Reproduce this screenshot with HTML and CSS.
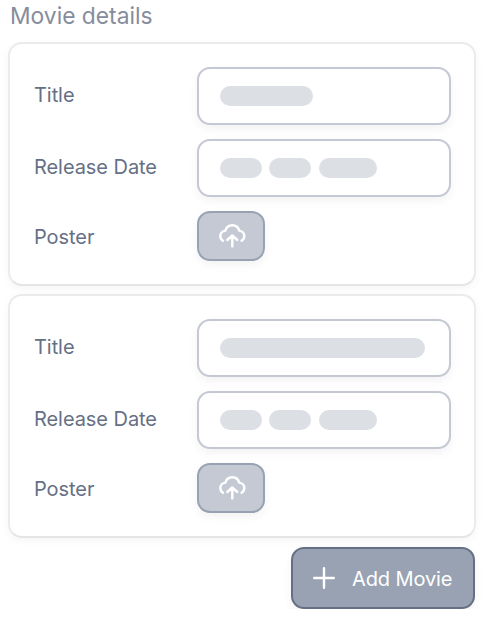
FILE: index.html
```html
<!DOCTYPE html>
<html lang="en">
<head>
<meta charset="utf-8">
<title>Movie details</title>
<link rel="stylesheet" href="styles.css">
</head>
<body>
<main class="form">
  <h1 class="heading">Movie details</h1>
  <section class="card">
    <div class="row"><span class="label">Title</span><div class="field"><i class="pill title-short"></i></div></div>
    <div class="row"><span class="label">Release Date</span><div class="field"><i class="pill"></i><i class="pill"></i><i class="pill year"></i></div></div>
    <div class="row poster"><span class="label">Poster</span><button class="upload" aria-label="Upload"><svg class="cloud" viewBox="0 0 28 26"><path d="M5 17.8C3.2 16.8 2.3 15 2.3 13C2.3 10 4.7 7.9 7.4 7.6C8.3 4.2 11 2.2 14.3 2.2C17.6 2.2 20.3 4.2 21.2 7.6C24 7.9 26.3 10 26.3 13C26.3 15 25.4 16.8 23.6 17.8M14.3 23.4V12.6M9.3 17L14.3 12.4L19.3 17"/></svg></button></div>
  </section>
  <section class="card">
    <div class="row"><span class="label">Title</span><div class="field"><i class="pill title-long"></i></div></div>
    <div class="row"><span class="label">Release Date</span><div class="field"><i class="pill"></i><i class="pill"></i><i class="pill year"></i></div></div>
    <div class="row poster"><span class="label">Poster</span><button class="upload" aria-label="Upload"><svg class="cloud" viewBox="0 0 28 26"><path d="M5 17.8C3.2 16.8 2.3 15 2.3 13C2.3 10 4.7 7.9 7.4 7.6C8.3 4.2 11 2.2 14.3 2.2C17.6 2.2 20.3 4.2 21.2 7.6C24 7.9 26.3 10 26.3 13C26.3 15 25.4 16.8 23.6 17.8M14.3 23.4V12.6M9.3 17L14.3 12.4L19.3 17"/></svg></button></div>
  </section>
  <button class="add"><svg class="plus" viewBox="0 0 22 22"><path d="M11 1.2V20.8M1.2 11H20.8"/></svg><span>Add Movie</span></button>
</main>
</body>
</html>
```
FILE: styles.css
```css
* { box-sizing: border-box; }
body {
  margin: 0;
  background: #fff;
  color: #667085;
  font-family: Inter, sans-serif;
  font-size: 20px;
}
.form {
  display: flex;
  flex-direction: column;
  width: 468px;
  margin-left: 8px;
}
.heading {
  height: 42px;
  margin: 0;
  padding-left: 2px;
  font-size: 22.8px;
  font-weight: 400;
  line-height: 32px;
  color: #858d9d;
}
.card {
  display: flex;
  flex-direction: column;
  gap: 14px;
  height: 244px;
  margin-bottom: 8px;
  padding: 23px 23px 23px 24px;
  border: 2px solid #ebebeb;
  border-bottom-color: #e5e5e5;
  border-radius: 14px;
  background: #fff;
  box-shadow: 0 3px 8px rgba(0, 0, 0, .04);
}
.row {
  display: grid;
  grid-template-columns: 163px 254px;
  height: 58px;
}
.poster { height: 50px; }
.label {
  align-self: center;
  line-height: 24px;
  padding-bottom: 2px;
  letter-spacing: -.06px;
}
.poster .label { padding: 2px 0 0; }
.field {
  display: flex;
  align-items: center;
  gap: 7.4px;
  padding-left: 21px;
  border: 2px solid #c4c8d3;
  border-radius: 13px;
  background: #fff;
  box-shadow: 0 4px 10px rgba(0, 0, 0, .05);
}
.pill {
  width: 42px;
  height: 20px;
  border-radius: 10px;
  background: #dce0e5;
}
.year { width: 58px; }
.title-short { width: 93px; }
.title-long { width: 205px; }
.upload {
  display: flex;
  align-items: center;
  justify-content: center;
  width: 68px;
  height: 50px;
  padding: 0 0 0 2px;
  border: 2px solid #98a2b3;
  border-radius: 13px;
  background: #c4c9d3;
  box-shadow: 0 4px 10px rgba(0, 0, 0, .05);
}
.cloud {
  width: 28px;
  height: 26px;
}
.cloud path, .plus path {
  fill: none;
  stroke: #fff;
  stroke-width: 2.4;
  stroke-linecap: round;
  stroke-linejoin: round;
}
.add {
  display: flex;
  align-items: center;
  align-self: flex-end;
  gap: 17px;
  width: 184px;
  height: 62px;
  margin: 1px 1px 0 0;
  padding: 0 0 0 20px;
  border: 2px solid #667085;
  border-radius: 13px;
  background: #98a2b3;
  box-shadow: 0 4px 10px rgba(0, 0, 0, .05);
  color: #fff;
  font: 20px/24px Inter, sans-serif;
  letter-spacing: -.1px;
}
.add span {
  padding-top: 2px;
  white-space: nowrap;
}
.plus {
  width: 22px;
  height: 22px;
}
```
